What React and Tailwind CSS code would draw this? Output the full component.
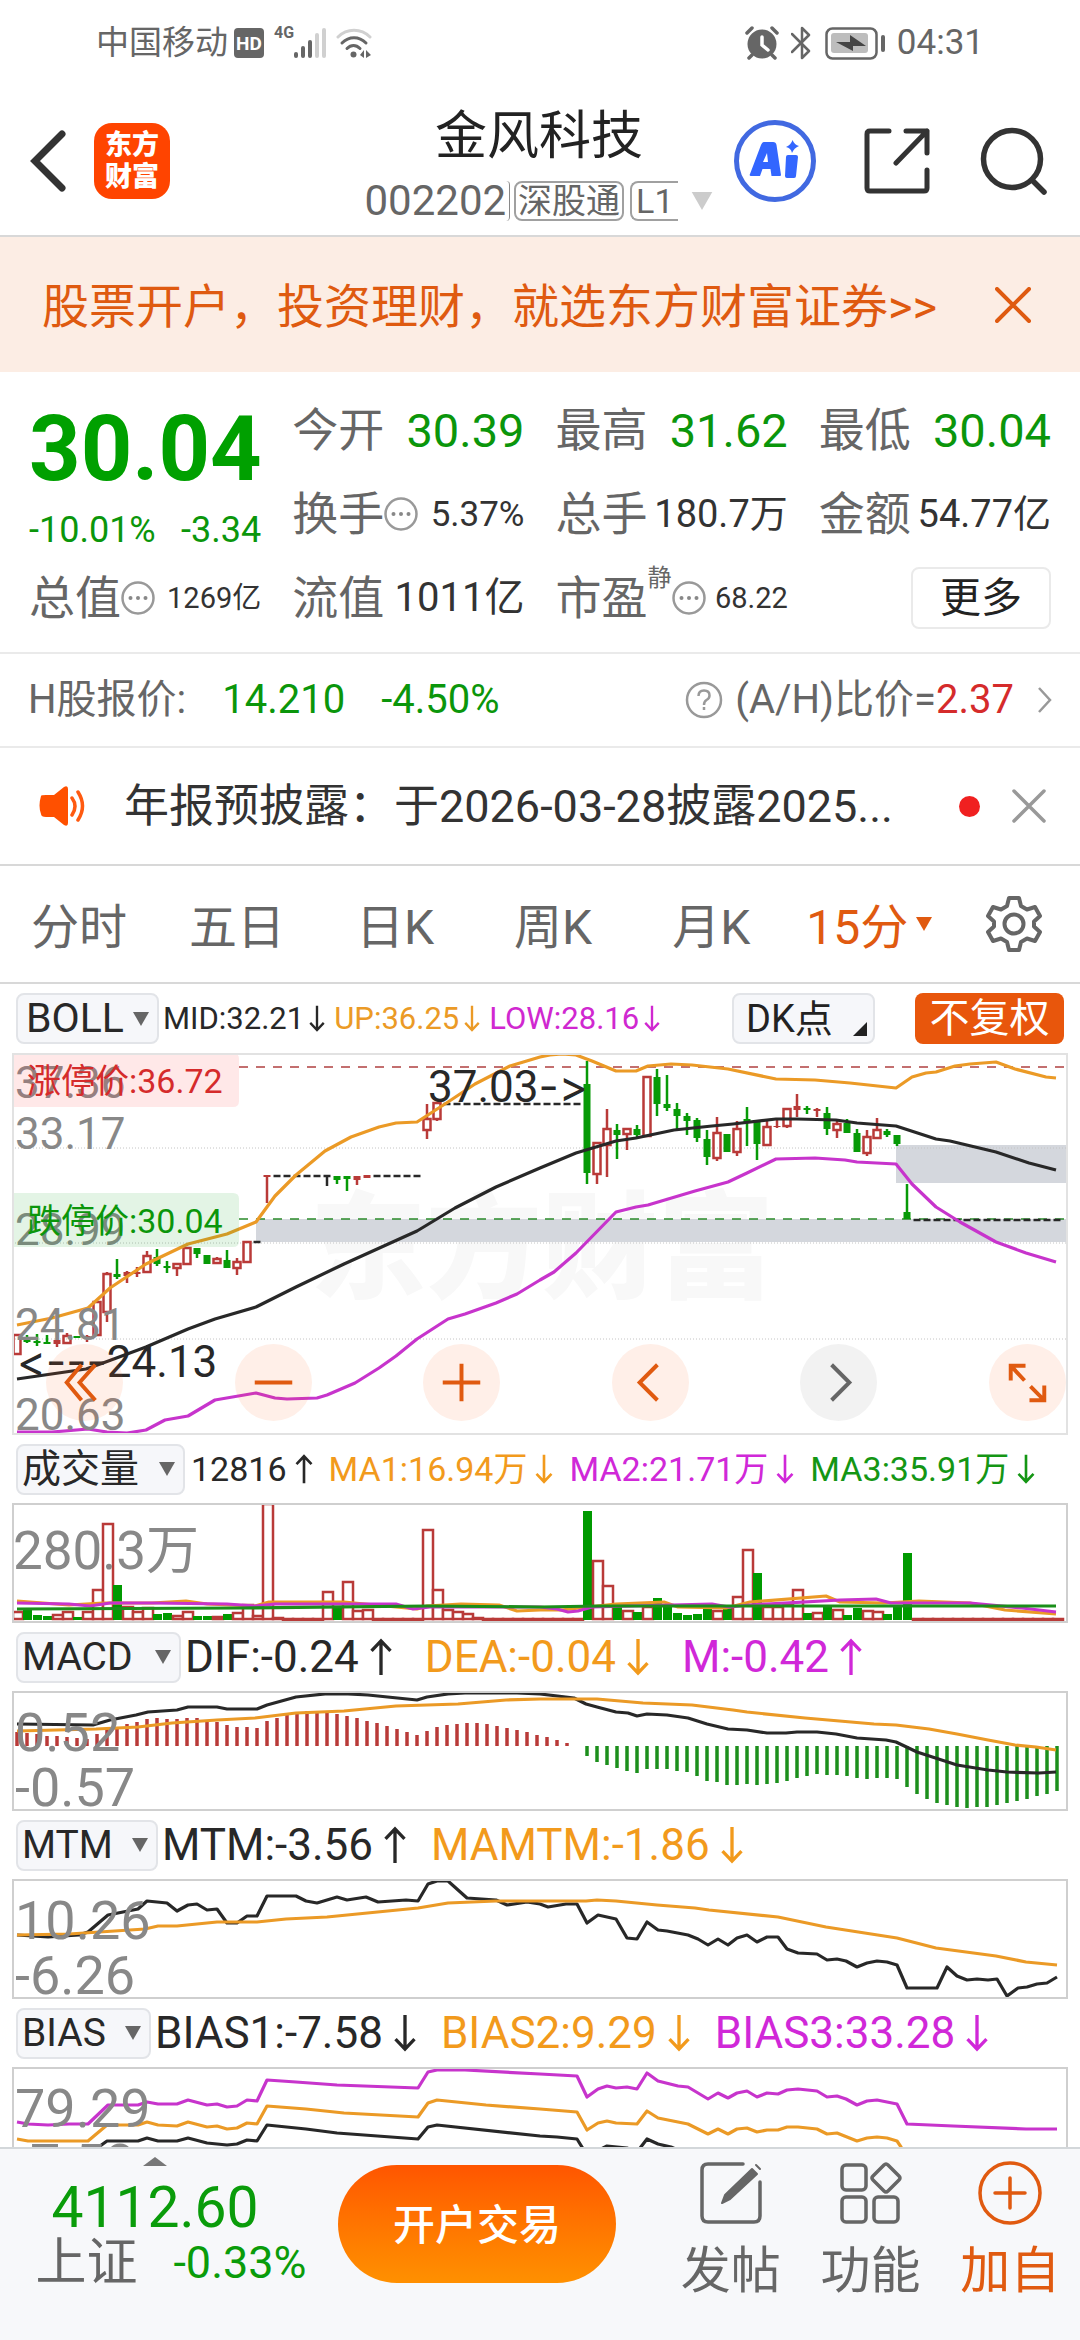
import React from "react";

const INK = "#282828";
const ORANGE = "#eb9a26";
const MAGENTA = "#c734cc";
const GREEN = "#079a07";
const RED = "#b93a38";

const barX = (i) => 5 + 10 * i;

function Arrow({ up, className = "" }) {
  return (
    <svg viewBox="0 0 24 40" className={"shrink-0 " + className} fill="none" stroke="currentColor" strokeWidth="3.5" aria-hidden="true">
      {up ? <path d="M12 39V3M2 13.5 12 3l10 10.5" /> : <path d="M12 1v36M2 26.5 12 37l10-10.5" />}
    </svg>
  );
}

function Caret({ className = "" }) {
  return (
    <svg viewBox="0 0 16 14" className={"shrink-0 " + className} fill="currentColor" aria-hidden="true">
      <path d="M0 0h16L8 14z" />
    </svg>
  );
}

function StatusBar() {
  return (
    <div className="flex h-[86px] items-center pl-24 pr-24 text-[#666]">
      <span className="text-[33px] leading-10">中国移动</span>
      <span className="ml-1.5 flex h-[30px] w-[30px] items-center justify-center rounded bg-[#666] text-[19px] leading-none font-bold text-white">HD</span>
      <span className="ml-2.5 mb-5 text-[16px] leading-4 font-bold">4G</span>
      <svg viewBox="0 0 32 30" className="h-[30px] w-8" fill="#666" aria-hidden="true">
        <rect x="0" y="24" width="4" height="6" rx="2" />
        <rect x="7" y="18" width="4" height="12" rx="2" />
        <rect x="14" y="12" width="4" height="18" rx="2" />
        <rect x="21" y="5" width="4" height="25" rx="2" fill="#d0d0d0" />
        <rect x="28" y="0" width="4" height="30" rx="2" fill="#d0d0d0" />
      </svg>
      <svg viewBox="0 0 36 30" className="ml-2.5 h-[30px] w-9" fill="none" strokeWidth="3" strokeLinecap="round" aria-hidden="true">
        <path d="M2 9C11 0 25 0 34 9" stroke="#d0d0d0" />
        <path d="M6 15c7-7 17-7 24 0M11 20.500c4-4 9-4 13 0" stroke="#666" />
        <circle cx="17.500" cy="26.500" r="3" fill="#666" />
        <path d="M24 27l4-5v8zM30 22l5 5-5 3z" fill="#666" />
      </svg>
      <div className="ml-auto flex items-center">
        <svg viewBox="0 0 34 34" className="h-[34px] w-[34px]" aria-hidden="true">
          <circle cx="17" cy="18" r="14.500" fill="#666" />
          <path d="M2 7l5-5M32 7l-5-5M7 29l-3 3M27 29l3 3" stroke="#666" strokeWidth="3.500" strokeLinecap="round" />
          <path d="M17 11v8l6 5" stroke="#fff" strokeWidth="3.500" fill="none" strokeLinecap="round" />
        </svg>
        <svg viewBox="0 0 20 34" className="ml-3 h-[34px] w-5" fill="none" stroke="#666" strokeWidth="2.500" strokeLinejoin="round" strokeLinecap="round" aria-hidden="true">
          <path d="M1 8l17 17-7 7V2l7 7L1 26" />
        </svg>
        <svg viewBox="0 0 60 34" className="ml-3.5 h-[34px] w-[60px]" aria-hidden="true">
          <rect x="1.500" y="2.500" width="50" height="30" rx="6" fill="none" stroke="#666" strokeWidth="2.500" />
          <rect x="6" y="7" width="37" height="20" rx="3" fill="#bdbdbd" />
          <path d="M11 16l14 0V9l16 11H28v5z" fill="#444" />
          <rect x="56" y="9" width="4" height="17" rx="2" fill="#666" />
        </svg>
        <span className="ml-3 text-[35px] leading-10">04:31</span>
      </div>
    </div>
  );
}

function Header() {
  return (
    <header className="grid h-[151px] grid-cols-[1fr_auto_1fr] items-start border-b-2 border-[#d8d8d8] pr-8 pl-[30px]">
      <div className="mt-[37px] flex items-center gap-7">
        <button aria-label="返回">
          <svg viewBox="0 0 36 62" className="h-[62px] w-9" fill="none" stroke="#333" strokeWidth="7" strokeLinecap="round">
            <path d="M32 4 5 31l27 27" />
          </svg>
        </button>
        <button className="flex h-[76px] w-[76px] flex-col items-center justify-center rounded-[18px] bg-[#ff4400] text-[27px] leading-8 font-black text-white">
          <span>东方</span>
          <span>财富</span>
        </button>
      </div>
      <div className="mt-4 flex flex-col items-center">
        <h1 className="text-[52px] leading-[70px] text-[#222]">金风科技</h1>
        <button className="mt-1 flex h-[50px] items-center text-[#666]">
          <span className="text-[42px] leading-none">002202</span>
          <span className="h-10 w-1 rounded-r-md border-r border-[#888]" />
          <span className="ml-1 flex h-10 items-center rounded-lg border-2 border-[#a0a0a0] px-0.5 text-[34px] leading-none">深股通</span>
          <span className="ml-1.5 flex h-10 items-center rounded-l-lg border-2 border-r-0 border-[#a0a0a0] px-1 text-[34px] leading-none">L1</span>
          <Caret className="ml-3 h-[18px] w-6 text-[#ccc]" />
        </button>
      </div>
      <div className="mt-[34px] flex items-center justify-end">
        <button aria-label="Ai">
          <svg viewBox="0 0 82 82" className="h-[82px] w-[82px]">
            <circle cx="41" cy="41" r="38.500" fill="none" stroke="#4169e1" strokeWidth="5" />
            <path d="M30 22h9q3 0 3.500 3l4.500 30q0 1-1 1h-8.500l-1-7h-8l-2.500 7H17q-2 0-1-2l11-29q1-3 3-3zm3 11-4 9h5zM54 35h8q2 0 2 2l-2 19q0 2-2 2h-7q-2 0-2-2l1-19q0-2 2-2z" fill="#3366ff" fillRule="evenodd" />
            <path d="M58.500 20q2 5 6.500 6-5 2-7 7-1-5-6-6 5-2 6.500-7z" fill="#3366ff" />
          </svg>
        </button>
        <button aria-label="分享" className="ml-12">
          <svg viewBox="0 0 66 66" className="h-[66px] w-[66px]" fill="none" stroke="#333" strokeWidth="5" strokeLinecap="round" strokeLinejoin="round">
            <path d="M25 3H6q-3 0-3 3v54q0 3 3 3h54q3 0 3-3V42M42 3h21v22M63 3 32 35" />
          </svg>
        </button>
        <button aria-label="搜索" className="ml-[50px]">
          <svg viewBox="0 0 68 68" className="h-[68px] w-[68px]" fill="none" stroke="#333" strokeWidth="5.500" strokeLinecap="round">
            <circle cx="32" cy="32" r="28.500" />
            <path d="M52 53l12 12" />
          </svg>
        </button>
      </div>
    </header>
  );
}

function Banner() {
  return (
    <div className="flex h-[135px] items-center justify-between bg-[#fcede4] pr-[49px] pl-[42px] text-[#df5a10]">
      <a href="#open" className="pt-1 text-[47px] leading-none whitespace-nowrap">股票开户，投资理财，就选东方财富证券&gt;&gt;</a>
      <button aria-label="关闭广告">
        <svg viewBox="0 0 36 36" className="h-9 w-9" stroke="currentColor" strokeWidth="4" strokeLinecap="round">
          <path d="M2 2l32 32M34 2 2 34" />
        </svg>
      </button>
    </div>
  );
}

function Dots() {
  return (
    <svg viewBox="0 0 34 34" className="h-[34px] w-[34px] shrink-0" aria-hidden="true">
      <circle cx="17" cy="17" r="15.500" fill="none" stroke="#999" strokeWidth="2.500" />
      <circle cx="9.500" cy="17" r="2" fill="#888" />
      <circle cx="17" cy="17" r="2" fill="#888" />
      <circle cx="24.500" cy="17" r="2" fill="#888" />
    </svg>
  );
}

function Item({ label, value, dots, sup, valueClass }) {
  return (
    <div className="flex items-center justify-between whitespace-nowrap">
      <span className="flex items-center text-[46px] leading-none text-[#666]">
        {label}
        {sup && <span className="mb-10 text-[24px] leading-none">{sup}</span>}
        {dots && <Dots />}
      </span>
      <span className={valueClass}>{value}</span>
    </div>
  );
}

function Quote() {
  const open = "text-[47px] leading-none text-[#0b960b]";
  const mid = "text-[38px] leading-none text-[#333]";
  return (
    <section className="grid auto-rows-[84px] grid-cols-4 gap-x-[31px] border-b-2 border-[#eaeaea] px-[29px] pt-4 pb-3">
      <div className="row-span-2 flex flex-col text-[#00a000]">
        <span className="mt-4 text-[90px] leading-[92px] font-bold">30.04</span>
        <span className="mt-3.5 flex justify-between text-[36px] leading-10 text-[#0b960b]">
          <span>-10.01%</span>
          <span>-3.34</span>
        </span>
      </div>
      <Item label="今开" value="30.39" valueClass={open} />
      <Item label="最高" value="31.62" valueClass={open} />
      <Item label="最低" value="30.04" valueClass={open} />
      <Item label="换手" dots value="5.37%" valueClass="text-[35px] leading-none text-[#333]" />
      <Item label="总手" value="180.7万" valueClass={mid} />
      <Item label="金额" value="54.77亿" valueClass={mid} />
      <Item label="总值" dots value="1269亿" valueClass="text-[29px] leading-none text-[#333]" />
      <Item label="流值" value="1011亿" valueClass="text-[40px] leading-none text-[#333]" />
      <Item label="市盈" sup="静" dots value="68.22" valueClass="text-[29px] leading-none text-[#333]" />
      <div className="flex items-center justify-end">
        <button className="h-[62px] w-[140px] rounded-lg border-2 border-[#eaeaea] text-[41px] leading-none text-[#222]">更多</button>
      </div>
    </section>
  );
}

function HShare() {
  return (
    <a href="#ah" className="flex h-[94px] items-center border-b-2 border-[#eaeaea] px-7 text-[40px] leading-none text-[#666]">
      <span>H股报价:</span>
      <span className="ml-9 text-[#0b960b]">14.210</span>
      <span className="ml-9 text-[#0b960b]">-4.50%</span>
      <svg viewBox="0 0 38 38" className="ml-auto h-[38px] w-[38px]" fill="none" stroke="#999" strokeWidth="2.500" aria-hidden="true">
        <circle cx="19" cy="19" r="17" />
        <path d="M13.500 15q0-5.500 5.500-5.500t5.500 5q0 3-3 4.500-2.500 1.500-2.500 5M19 26v3" />
      </svg>
      <span className="ml-3">(A/H)比价=</span>
      <span className="text-[#d52b2b]">2.37</span>
      <svg viewBox="0 0 14 26" className="ml-6 h-[26px] w-3.5" fill="none" stroke="#999" strokeWidth="2.500" aria-hidden="true">
        <path d="M1 1l11 12L1 25" />
      </svg>
    </a>
  );
}

function Notice() {
  return (
    <div className="flex h-[118px] items-center border-b-2 border-[#d8d8d8] pr-[34px] pl-[38px]">
      <svg viewBox="0 0 50 40" className="h-10 w-[50px]" aria-hidden="true">
        <path d="M3 10q0-1 5-1h8L26 1q4-2 4 2v34q0 4-4 2L16 31H8q-5 0-5-3-3-8 0-18z" fill="#ff5000" />
        <path d="M34 12q6 8 0 17M40 6q9 14 0 28" fill="none" stroke="#ff5a10" strokeWidth="3.500" strokeLinecap="round" />
      </svg>
      <a href="#notice" className="ml-9 text-[45px] leading-none whitespace-nowrap text-[#333]">年报预披露：于2026-03-28披露2025...</a>
      <span className="ml-auto h-[21px] w-[21px] rounded-full bg-[#f02020]" />
      <button aria-label="关闭公告" className="ml-8">
        <svg viewBox="0 0 34 34" className="h-[34px] w-[34px]" stroke="#999" strokeWidth="3.500" strokeLinecap="round">
          <path d="M2 2l30 30M32 2 2 32" />
        </svg>
      </button>
    </div>
  );
}

function Tabs() {
  return (
    <nav className="grid h-[118px] grid-cols-[repeat(6,6fr)_5fr] items-center border-b-2 border-[#d8d8d8] text-[48px] leading-none text-[#666]">
      {["分时", "五日", "日K", "周K", "月K"].map((t) => (
        <button key={t} className="pt-2 text-center">{t}</button>
      ))}
      <button className="flex items-center justify-center gap-2 pt-2 whitespace-nowrap text-[#e05a10]">
        15分<Caret className="mb-2 h-[14px] w-4" />
      </button>
      <button aria-label="设置" className="flex justify-center">
        <svg viewBox="0 0 58 58" className="h-[58px] w-[58px]" fill="none" stroke="#666" strokeWidth="4" strokeLinejoin="round">
          <path d="M24 3h10l2 8 6 3.500 8-2.500 5 9-6 5.500v5l6 5.500-5 9-8-2.500-6 3.500-2 8H24l-2-8-6-3.500-8 2.500-5-9 6-5.500v-5L3 21l5-9 8 2.500 6-3.500z" />
          <circle cx="29" cy="29" r="9.500" />
        </svg>
      </button>
    </nav>
  );
}

/* [bar index, colour, high, body top, body bottom, low]; r = hollow red, R = solid red, g = green, k = unchanged */
const candles = [
  [0, "r", 282, 282, 301, 301], [1, "g", 282, 287, 289, 290], [2, "g", 281, 288, 290, 293], [3, "g", 282, 289, 291, 291],
  [4, "R", 287, 287, 291, 294], [5, "r", 280, 283, 290, 291], [6, "g", 283, 283, 285, 285], [7, "R", 282, 283, 284, 289],
  [8, "r", 249, 249, 282, 283], [9, "r", 219, 221, 259, 269], [10, "g", 206, 221, 224, 226], [11, "R", 218, 219, 223, 230],
  [12, "R", 214, 219, 221, 224], [13, "r", 198, 203, 219, 219], [14, "g", 196, 204, 211, 213], [15, "g", 208, 213, 215, 220],
  [16, "r", 211, 211, 215, 223], [17, "r", 195, 195, 211, 211], [18, "g", 195, 195, 201, 205], [19, "g", 202, 202, 211, 211],
  [20, "r", 204, 206, 210, 210], [21, "g", 197, 207, 215, 215], [22, "r", 205, 209, 215, 222], [23, "r", 189, 189, 209, 209],
  [24, "k", 189, 189, 189, 189], [25, "R", 122, 122, 124, 150],
  ...[26, 27, 28, 29, 30].map((i) => [i, "k", 123, 123, 123, 123]),
  [31, "k", 123, 123, 123, 133], [32, "g", 123, 123, 127, 131], [33, "g", 123, 123, 126, 138], [34, "R", 123, 123, 127, 132],
  [35, "R", 122, 122, 125, 125],
  ...[36, 37, 38, 39, 40].map((i) => [i, "k", 123, 123, 123, 123]),
  [41, "r", 51, 66, 77, 86], [42, "r", 50, 50, 66, 68],
  ...Array.from({ length: 14 }, (_, n) => [43 + n, "k", 51, 51, 51, 51]),
  [57, "g", 8, 31, 120, 131], [58, "r", 90, 90, 121, 131], [59, "r", 56, 76, 92, 124], [60, "g", 71, 77, 82, 106],
  [61, "r", 76, 76, 81, 97], [62, "g", 72, 76, 82, 84], [63, "r", 24, 24, 83, 83], [64, "g", 16, 24, 51, 63],
  [65, "g", 22, 51, 55, 58], [66, "g", 50, 56, 63, 76], [67, "g", 60, 63, 68, 82], [68, "g", 65, 67, 85, 89],
  [69, "g", 77, 86, 104, 112], [70, "r", 64, 80, 105, 108], [71, "g", 81, 81, 99, 99], [72, "r", 68, 76, 99, 103],
  [73, "g", 54, 66, 69, 93], [74, "g", 69, 69, 91, 107], [75, "r", 66, 74, 92, 92], [76, "R", 67, 73, 74, 75],
  [77, "r", 55, 56, 73, 75], [78, "R", 41, 53, 57, 64], [79, "g", 53, 55, 57, 61], [80, "R", 55, 56, 58, 64],
  [81, "g", 54, 60, 76, 82], [82, "r", 66, 71, 77, 85], [83, "g", 66, 70, 80, 80], [84, "g", 76, 80, 99, 99],
  [85, "r", 77, 84, 100, 103], [86, "r", 65, 77, 85, 86], [87, "g", 76, 78, 82, 84], [88, "g", 82, 82, 91, 93],
  [89, "g", 131, 159, 166, 166],
  ...Array.from({ length: 15 }, (_, n) => [90 + n, "k", 167, 167, 167, 167]),
];

function Candle({ c }) {
  const [i, kind, high, top, bottom, low] = c;
  const x = barX(i);
  const color = kind === "g" ? GREEN : kind === "k" ? INK : RED;
  if (kind === "k") {
    return (
      <g stroke={color} strokeWidth="2.5">
        <path d={`M${x - 3.5} ${top}h7`} />
        {low > top && <path d={`M${x} ${top}V${low}`} />}
      </g>
    );
  }
  return (
    <g stroke={color} strokeWidth="2.5">
      {high < top && <path d={`M${x} ${high}V${top}`} />}
      {low > bottom && <path d={`M${x} ${bottom}V${low}`} />}
      {kind === "r" ? (
        <rect x={x - 3.5} y={top} width="7" height={Math.max(bottom - top, 2)} fill="none" />
      ) : (
        <rect x={x - 3.5} y={top} width="7" height={Math.max(bottom - top, 1)} fill={color} stroke="none" />
      )}
    </g>
  );
}

const line = { fill: "none", strokeWidth: 3.2, strokeLinejoin: "round" };

const upper = "5,272 40,265 76,255 98,235 134,211 176,191 215,181 244,169 263,143 284,122 313,98 339,84 367,74 384,70 405,69 436,49 463,31 498,13 528,4 538,2 550,1 564,2 580,8 604,18 624,18 636,13 659,11 680,12 716,16 764,26 803,27 838,30 884,35 900,24 914,20 924,19 943,13 958,11 984,9 1003,16 1034,24 1044,25";
const middle = "5,326 74,316 91,310 134,294 176,276 203,266 244,254 284,234 332,211 405,178 443,155 484,134 528,115 564,100 604,88 624,85 662,77 700,73 721,71 764,66 785,66 824,67 845,70 884,73 924,86 938,88 984,99 1017,110 1044,117";
const lower = "5,379 40,379 76,376 95,379 115,380 134,377 153,367 176,363 203,347 244,340 263,345 275,346 305,345 315,342 343,330 367,315 384,303 405,286 436,266 453,261 484,250 505,241 528,227 542,219 564,200 604,159 624,154 636,152 683,138 716,129 735,120 764,106 803,105 833,107 845,109 884,111 900,131 924,154 948,169 984,189 1014,200 1044,209";

function AxisText({ x = 3, y, size = 44, children, fill = "#888" }) {
  return <text x={x} y={y} fontSize={size} fill={fill}>{children}</text>;
}

function RoundButton({ label, gray, children }) {
  return (
    <button aria-label={label} className={"h-[77px] w-[77px] rounded-full " + (gray ? "bg-[#808080]/10 text-[#666]" : "bg-[#ff5a14]/10 text-[#e05a10]")}>
      <svg viewBox="0 0 78 78" className="h-full w-full" fill="none" stroke="currentColor" strokeWidth="4">{children}</svg>
    </button>
  );
}

function KChart() {
  return (
    <div className="relative border-2 border-[#e2e2e2]">
      <svg viewBox="2 2 1052 378" className="block w-full">
        <text x="298" y="236" fontSize="116" fontWeight="900" fill="#f8f8f8">东方财富</text>
        <g fill="#d4d7dd">
          <rect x="244" y="166" width="811" height="23" />
          <rect x="884" y="92" width="171" height="38" />
        </g>
        <path d="M0 95H1055M0 190H1055M0 286H1055" stroke="#c4c4c4" strokeDasharray="1 2" />
        <path d="M227 14H1055" stroke="#b04040" strokeWidth="1.500" strokeDasharray="9 8" />
        <path d="M227 166H1055" stroke="#2a8a2a" strokeWidth="1.500" strokeDasharray="9 8" />
        {candles.map((c) => <Candle key={c[0]} c={c} />)}
        <polyline points={upper} stroke={ORANGE} {...line} />
        <polyline points={middle} stroke={INK} {...line} />
        <polyline points={lower} stroke={MAGENTA} {...line} />
        <AxisText y="45">37.36</AxisText>
        <AxisText y="96">33.17</AxisText>
        <AxisText y="192">28.99</AxisText>
        <AxisText y="287">24.81</AxisText>
        <AxisText y="377">20.63</AxisText>
        <path d="M0 0h221q6 0 6 6v42q0 6-6 6H0z" fill="#ff4040" fillOpacity="0.12" />
        <path d="M0 140h221q6 0 6 6v42q0 6-6 6H0z" fill="#18a828" fillOpacity="0.12" />
        <AxisText x={15} y="40" size={34} fill="#d52b2b">涨停价:36.72</AxisText>
        <AxisText x={15} y="180" size={34} fill="#0b960b">跌停价:30.04</AxisText>
        <AxisText x={416} y="49" fill={INK}>37.03<tspan className="font-['Inter'] [font-variant-ligatures:none]">-&gt;</tspan></AxisText>
        <AxisText x={5} y="324" fill={INK}><tspan className="font-['Inter'] [font-variant-ligatures:none]">&lt;---</tspan>24.13</AxisText>
      </svg>
      <div className="absolute right-0 bottom-3 left-8 flex justify-between">
        <RoundButton label="快退"><path d="M36 21 21 39l15 18M50 21 34 39l16 18" /></RoundButton>
        <RoundButton label="缩小"><path d="M20 39h38" /></RoundButton>
        <RoundButton label="放大"><path d="M20 39h38M39 20v38" /></RoundButton>
        <RoundButton label="前移"><path d="M46 21 28 39l18 18" /></RoundButton>
        <RoundButton label="后移" gray><path d="M32 21l18 18-18 18" /></RoundButton>
        <RoundButton label="全屏"><path d="M22 37V22h15M23 23l13 14M56 42v15H41M55 56 42 43" /></RoundButton>
      </div>
    </div>
  );
}

const volumeTops = [
  ["r", 108], ["g", 105], ["g", 111], ["g", 112], ["r", 111], ["r", 108], ["g", 113], ["r", 108], ["r", 86], ["r", 20],
  ["g", 81], ["r", 103], ["r", 108], ["r", 104], ["g", 110], ["g", 109], ["r", 112], ["r", 108], ["g", 112], ["g", 112],
  ["r", 113], ["g", 110], ["r", 109], ["r", 101], ["r", 112], ["r", 0], ["r", 114], ["r", 115], ["r", 115], ["r", 115],
  ["r", 115], ["r", 88], ["g", 104], ["r", 78], ["r", 107], ["r", 106], ["r", 115], ["r", 115], ["r", 115], ["r", 115],
  ["r", 115], ["r", 26], ["r", 86], ["r", 106], ["r", 108], ["r", 110], ["r", 114], ["r", 115], ["r", 115], ["r", 115],
  ["r", 115], ["r", 115], ["r", 115], ["r", 115], ["r", 115], ["r", 115], ["r", 115], ["g", 7], ["r", 57], ["r", 82],
  ["g", 103], ["r", 107], ["g", 108], ["r", 103], ["g", 94], ["g", 103], ["g", 109], ["g", 111], ["g", 110], ["g", 105],
  ["r", 107], ["g", 103], ["r", 93], ["r", 46], ["g", 69], ["r", 103], ["r", 103], ["r", 101], ["r", 86], ["g", 109],
  ["r", 109], ["g", 101], ["r", 106], ["g", 111], ["g", 104], ["r", 107], ["r", 108], ["g", 110], ["g", 103], ["g", 49],
  ...Array.from({ length: 15 }, () => ["r", 115]),
];

function SubChart({ children }) {
  return (
    <div className="border-2 border-[#cfcfcf]">
      <svg viewBox="2 1 1052 116" className="block w-full">{children}</svg>
    </div>
  );
}

function VolumeChart() {
  return (
    <SubChart>
      {volumeTops.map(([kind, top], i) =>
        kind === "g" ? (
          <rect key={i} x={barX(i) - 4} y={top} width="9" height={116 - top} fill="#009a00" />
        ) : (
          <rect key={i} x={barX(i) - 4} y={top} width="10" height={Math.max(115 - top, 1)} fill="#fff" stroke={RED} strokeWidth="2.500" />
        )
      )}
      <polyline points="5,97 57,101 91,99 140,99 174,97 195,100 243,102 257,98 332,98 405,105 415,102 449,100 487,101 505,107 528,106 549,106 604,100 652,98 666,103 714,104 738,98 814,92 828,98 872,99 907,97 958,99 993,106 1044,110" stroke={ORANGE} {...line} />
      <polyline points="5,99 57,100 78,102 98,99 140,99 215,100 243,102 263,100 384,100 401,105 418,103 528,103 545,105 556,108 566,107 580,103 700,100 717,103 738,101 828,96 864,95 879,99 958,99 1010,104 1044,108" stroke={MAGENTA} {...line} />
      <polyline points="5,105 229,104 415,102 528,103 587,102 700,102 1000,102 1044,102" stroke="#1a8f1a" {...line} />
      <AxisText x={1} y="65" size={53}>280.3万</AxisText>
    </SubChart>
  );
}

const macdUp = [40, 41, 42, 44, 44, 45, 46, 47, 42, 36, 35, 32, 30, 27, 26, 27, 27, 26, 26, 29, 30, 33, 35, 35, 36, 29, 26, 22, 20, 19, 19, 20, 22, 24, 26, 29, 31, 34, 37, 40, 43, 39, 35, 33, 32, 31, 31, 32, 34, 36, 38, 40, 43, 45, 48, 51];
const macdDown = [64, 70, 73, 76, 79, 81, 77, 77, 77, 79, 80, 84, 89, 90, 93, 93, 92, 93, 92, 91, 89, 86, 84, 82, 83, 83, 84, 86, 87, 86, 86, 87, 95, 102, 107, 111, 113, 115, 116, 115, 115, 113, 111, 109, 107, 104, 102, 99];

function MacdChart() {
  return (
    <SubChart>
      {macdUp.map((y, i) => <path key={i} d={`M${barX(i)} 54V${y}`} stroke={RED} strokeWidth="3.500" />)}
      {macdDown.map((y, i) => <path key={i} d={`M${barX(i + 57)} 54V${y}`} stroke="#1c8f1c" strokeWidth="3.500" />)}
      <polyline points="5,32 81,33 98,28 124,23 136,20 165,18 176,15 205,15 215,17 245,17 255,13 284,5 313,2 336,2 356,3 405,8 415,5 436,2 453,1 505,1 528,2 562,6 574,12 585,15 604,20 616,21 625,24 635,22 655,23 676,26 695,32 716,37 735,38 755,41 774,41 785,40 805,40 824,42 845,46 874,48 884,50 905,60 945,73 976,78 995,80 1027,81 1044,80" stroke={INK} {...line} />
      <polyline points="5,39 84,37 126,35 160,31 205,28 243,26 284,21 332,19 384,14 446,12 494,8 528,7 585,7 631,11 680,13 721,18 735,20 793,26 862,32 884,33 917,37 945,42 976,48 1003,53 1024,55 1044,58" stroke={ORANGE} {...line} />
      <AxisText y="59" size={54}>0.52</AxisText>
      <AxisText y="114" size={54}>-0.57</AxisText>
    </SubChart>
  );
}

function MtmChart() {
  return (
    <SubChart>
      <polyline points="5,55 36,57 67,55 76,52 96,35 126,29 135,21 155,23 165,31 176,25 185,24 195,30 205,29 215,43 225,43 235,36 245,36 255,16 284,16 294,21 305,23 325,17 335,20 354,17 366,22 394,20 406,21 416,4 425,1 436,1 455,18 484,20 495,25 515,22 528,24 536,27 554,24 565,24 575,43 586,35 604,39 615,58 625,59 635,42 646,50 655,51 676,55 686,59 696,65 706,59 716,65 725,58 735,55 745,62 755,57 766,57 775,69 786,73 805,74 815,80 825,79 834,81 845,87 855,83 865,81 875,82 885,85 895,108 925,108 935,87 945,96 955,100 965,99 976,100 985,99 995,116 1006,108 1015,107 1025,104 1035,103 1045,97" stroke={INK} {...line} />
      <polyline points="5,55 57,54 133,49 146,46 165,46 205,42 245,42 274,39 315,37 406,28 436,23 484,21 574,21 585,20 604,21 645,25 683,28 697,30 766,37 814,47 885,58 924,68 984,76 1014,82 1045,85" stroke={ORANGE} {...line} />
      <AxisText y="59" size={54}>10.26</AxisText>
      <AxisText y="114" size={54}>-6.26</AxisText>
    </SubChart>
  );
}

function BiasChart() {
  return (
    <SubChart>
      <polyline points="5,54 16,56 36,57 57,56 76,56 96,37 126,37 135,34 146,36 165,36 176,32 195,37 205,36 215,39 225,38 235,32 245,33 255,12 284,14 325,17 406,20 416,4 425,2 453,2 528,6 565,8 575,29 586,21 595,18 604,20 615,19 625,21 635,5 646,13 666,18 676,19 696,31 706,25 716,30 725,25 735,23 745,29 755,25 766,26 775,22 786,21 805,23 815,29 825,28 834,31 845,37 855,33 865,32 885,36 895,56 941,58 1014,61 1045,61" stroke={MAGENTA} {...line} />
      <polyline points="5,71 16,73 76,73 95,57 126,57 135,54 146,57 165,58 176,54 195,59 205,58 215,61 225,60 235,55 245,56 255,38 294,41 332,45 406,49 416,35 425,32 474,37 528,41 565,44 575,62 586,55 595,53 604,55 625,56 635,43 646,50 676,56 696,66 706,61 716,66 725,61 735,60 745,64 755,62 766,62 775,59 786,59 805,61 815,66 825,65 845,73 855,70 865,69 875,70 885,73 889,79 895,90 1045,95" stroke={ORANGE} {...line} />
      <polyline points="5,88 76,88 88,78 95,73 126,73 135,70 146,73 165,73 176,70 195,75 215,77 225,76 235,72 245,73 255,57 294,61 325,65 406,71 416,59 425,57 528,68 545,69 565,71 570,79 575,88 595,78 615,80 625,84 635,71 646,76 659,79 696,95 885,100 895,112 1045,115" stroke={INK} {...line} />
      <AxisText y="59" size={54}>79.29</AxisText>
      <AxisText y="114" size={54}>-7.58</AxisText>
    </SubChart>
  );
}

function IndicatorRow({ name, buttonClass, items, valuesClass = "ml-1 gap-6 text-[44px]", arrowClass = "ml-2.5 h-[38px] w-6" }) {
  return (
    <div className="flex h-[68px] items-center pl-1 whitespace-nowrap">
      <button className={"flex h-[51px] shrink-0 items-center justify-between rounded-lg border-2 border-[#e2e4e8] bg-[#f6f7fa] pr-2 pl-1 text-[39px] leading-none text-[#282828] " + buttonClass}>
        {name}<Caret className="h-[14px] w-4 text-[#666]" />
      </button>
      <div className={"flex items-center leading-none " + valuesClass}>
        {items.map((it) => (
          <span key={it.text} className={"flex items-center " + it.color}>
            {it.text}
            <Arrow up={it.up} className={arrowClass} />
          </span>
        ))}
      </div>
    </div>
  );
}

function BollRow() {
  return (
    <div className="flex h-[69px] items-center pl-1 text-[31px] leading-none whitespace-nowrap">
      <button className="flex h-[51px] w-[143px] items-center justify-between rounded-lg border-2 border-[#e2e4e8] bg-[#f6f7fa] px-2 text-[41px] leading-none text-[#282828]">
        BOLL<Caret className="h-[14px] w-4 text-[#666]" />
      </button>
      <div className="ml-1 flex items-center gap-2">
        <span className="flex items-center gap-1 text-[#282828]">MID:32.21<Arrow className="h-[27px] w-[18px]" /></span>
        <span className="flex items-center gap-1 text-[#eb9a26]">UP:36.25<Arrow className="h-[27px] w-[18px]" /></span>
        <span className="flex items-center gap-1 text-[#d028d0]">LOW:28.16<Arrow className="h-[27px] w-[18px]" /></span>
      </div>
      <button className="relative ml-auto flex h-[51px] w-[143px] items-center rounded-lg border-2 border-[#e2e4e8] bg-[#f6f7fa] pl-3 text-[38px] leading-none text-[#222]">
        DK点
        <svg viewBox="0 0 14 14" className="absolute right-1.5 bottom-1.5 h-3.5 w-3.5" aria-hidden="true"><path d="M14 0v14H0z" fill="#222" /></svg>
      </button>
      <button className="mr-1 ml-10 h-[51px] w-[149px] rounded-lg bg-[#e8560c] text-[40px] leading-none text-white">不复权</button>
    </div>
  );
}

const ink = "text-[#282828]";
const amber = "text-[#f29a1c]";
const violet = "text-[#d028d8]";
const leaf = "text-[#149614]";

function Charts() {
  return (
    <section className="px-3">
      <BollRow />
      <KChart />
      <IndicatorRow name="成交量" buttonClass="w-[169px]" valuesClass="ml-1.5 gap-4 text-[34px]" arrowClass="ml-2 h-[38px] w-[18px]" items={[
        { text: "12816", up: true, color: ink },
        { text: "MA1:16.94万", color: amber },
        { text: "MA2:21.71万", color: violet },
        { text: "MA3:35.91万", color: leaf },
      ]} />
      <VolumeChart />
      <IndicatorRow name="MACD" buttonClass="w-[165px]" valuesClass="ml-1 gap-8 text-[44px]" items={[
        { text: "DIF:-0.24", up: true, color: ink },
        { text: "DEA:-0.04", color: amber },
        { text: "M:-0.42", up: true, color: violet },
      ]} />
      <MacdChart />
      <IndicatorRow name="MTM" buttonClass="w-[142px]" items={[
        { text: "MTM:-3.56", up: true, color: ink },
        { text: "MAMTM:-1.86", color: amber },
      ]} />
      <MtmChart />
      <IndicatorRow name="BIAS" buttonClass="w-[135px]" items={[
        { text: "BIAS1:-7.58", color: ink },
        { text: "BIAS2:9.29", color: amber },
        { text: "BIAS3:33.28", color: violet },
      ]} />
      <BiasChart />
    </section>
  );
}

function FooterAction({ label, className, children }) {
  return (
    <button className={"flex flex-col items-center pt-3 text-[50px] leading-[64px] " + className}>
      <svg viewBox="0 0 64 64" className="mb-3.5 h-16 w-16" fill="none" stroke="currentColor" strokeWidth="3.500" strokeLinejoin="round" strokeLinecap="round" aria-hidden="true">{children}</svg>
      {label}
    </button>
  );
}

function Footer() {
  return (
    <footer className="flex h-[193px] shrink-0 items-start border-t-2 border-[#d3d7da] bg-[#f7f8fa]">
      <button className="flex w-[338px] flex-col items-center pt-2 pr-7 text-[#0a9c0a]">
        <svg viewBox="0 0 24 9" className="h-[9px] w-6" fill="#777" aria-hidden="true"><path d="M12 0l12 9H0z" /></svg>
        <span className="mt-3.5 text-[57px] leading-[56px]">4112.60</span>
        <span className="flex items-center gap-9 pl-8 leading-[54px]">
          <span className="text-[51px] text-[#666]">上证</span>
          <span className="text-[45px]">-0.33%</span>
        </span>
      </button>
      <button className="mt-4 h-[118px] w-[278px] rounded-full bg-linear-to-b from-[#ff5500] to-[#ff9000] pt-1 text-[42px] leading-none font-medium text-white">开户交易</button>
      <div className="ml-[45px] grid flex-1 grid-cols-3">
        <FooterAction label="发帖" className="text-[#666]">
          <path d="M44 3H9q-6 0-6 6v46q0 6 6 6h46q6 0 6-6V21" />
          <path d="M23 42l3-8 27-26 5 5-27 25zM57 4l4 4" fill="currentColor" strokeWidth="2" />
        </FooterAction>
        <FooterAction label="功能" className="text-[#666]">
          <rect x="4" y="4" width="24" height="25" rx="4" />
          <rect x="4" y="36" width="24" height="25" rx="4" />
          <rect x="36" y="36" width="24" height="25" rx="4" />
          <path d="M46 4q2-2 4 0l11 11q2 2 0 4L50 30q-2 2-4 0L35 19q-2-2 0-4z" />
        </FooterAction>
        <FooterAction label="加自" className="text-[#e05a10]">
          <circle cx="32" cy="32" r="30" />
          <path d="M17 32h30M32 17v30" />
        </FooterAction>
      </div>
    </footer>
  );
}

export default function App() {
  return (
    <div className="flex h-screen flex-col overflow-hidden bg-white font-['Roboto','Noto_Sans_CJK_SC',sans-serif]">
      <main className="min-h-0 flex-1 overflow-hidden">
        <StatusBar />
        <Header />
        <Banner />
        <Quote />
        <HShare />
        <Notice />
        <Tabs />
        <Charts />
      </main>
      <Footer />
    </div>
  );
}
